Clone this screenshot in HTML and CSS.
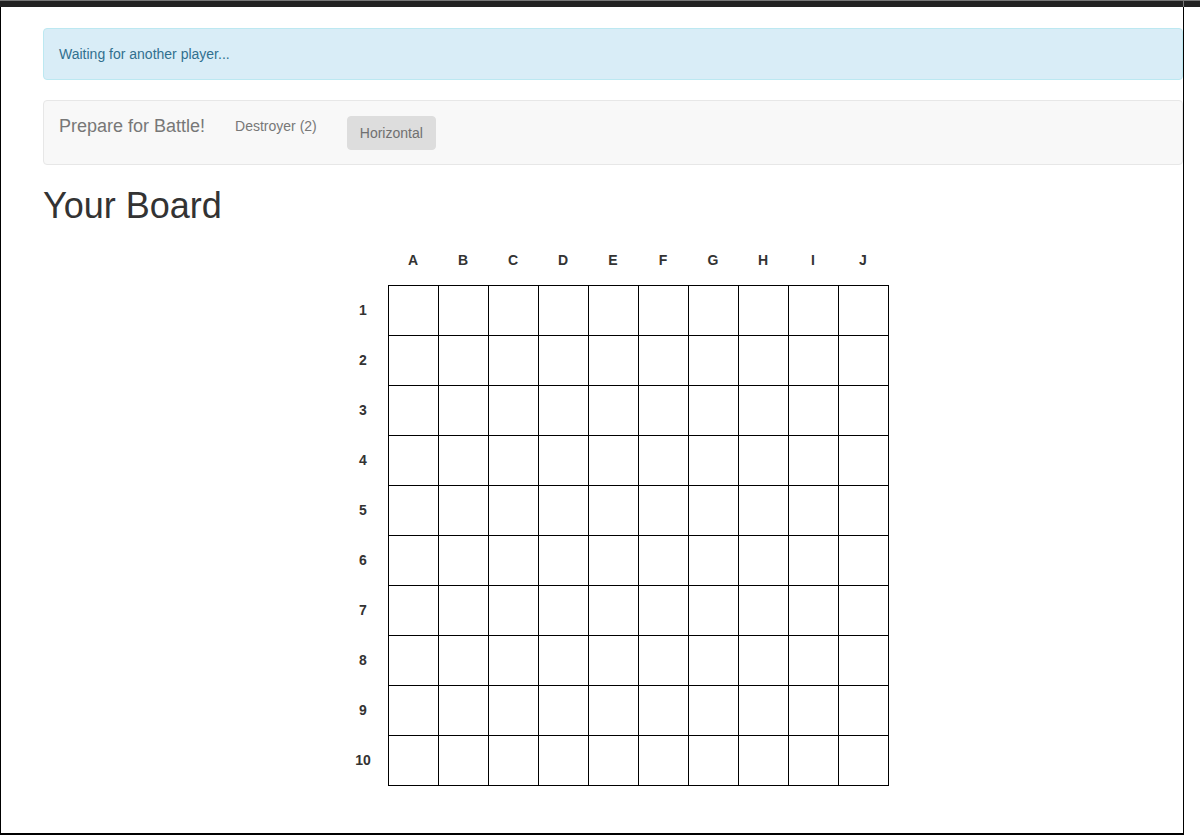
FILE: index.html
```html
<!DOCTYPE html>
<html lang="en">
<head>
<meta charset="utf-8">
<title>Battleship</title>
<link rel="stylesheet" href="styles.css">
</head>
<body>
<div class="topbar"></div>
<div class="frame">
  <div class="alert">Waiting for another player...</div>
  <div class="toolbar">
    <span class="brand">Prepare for Battle!</span>
    <span class="ship">Destroyer (2)</span>
    <button class="btn" type="button">Horizontal</button>
  </div>
  <h1 class="title">Your Board</h1>
  <div class="board-wrap">
    <div class="board">
      <div class="corner"></div>
      <div class="col-labels">
        <span>A</span><span>B</span><span>C</span><span>D</span><span>E</span>
        <span>F</span><span>G</span><span>H</span><span>I</span><span>J</span>
      </div>
      <div class="row-labels">
        <span>1</span><span>2</span><span>3</span><span>4</span><span>5</span>
        <span>6</span><span>7</span><span>8</span><span>9</span><span>10</span>
      </div>
      <div class="cells" id="cells"></div>
    </div>
  </div>
</div>
<script>
  var c = document.getElementById('cells');
  for (var i = 0; i < 100; i++) {
    var d = document.createElement('div');
    d.className = 'cell';
    c.appendChild(d);
  }
</script>
</body>
</html>
```

FILE: styles.css
```css
html, body {
  margin: 0;
  padding: 0;
  background: #fff;
}

body {
  font-family: "Liberation Sans", Arial, sans-serif;
  font-size: 14px;
  line-height: 20px;
  color: #333;
}

.topbar {
  height: 6px;
  border-top: 1px solid #777;
  background: linear-gradient(to right, #222 1183px, #777 1183px, #777 1184px, #222 1184px);
}

.frame {
  box-sizing: border-box;
  width: 1184px;
  height: 828px;
  border-left: 1px solid #000;
  border-right: 1px solid #000;
  border-bottom: 2px solid #000;
  padding: 21px 0 0 42px;
}

.alert {
  box-sizing: border-box;
  height: 52px;
  padding: 15px;
  margin-bottom: 20px;
  background: #d9edf7;
  border: 1px solid #bce8f1;
  border-radius: 4px;
  color: #31708f;
}

.toolbar {
  box-sizing: border-box;
  height: 65px;
  display: flex;
  align-items: flex-start;
  background: #f8f8f8;
  border: 1px solid #e7e7e7;
  border-radius: 4px;
  margin-bottom: 20px;
  color: #777;
}

.brand {
  padding: 15px;
  font-size: 18px;
  line-height: 20px;
}

.ship {
  margin: 15px 15px 0 15px;
  line-height: 20px;
}

.btn {
  margin: 15px 0 0 15px;
  height: 34px;
  padding: 6px 12px;
  font-family: inherit;
  font-size: 14px;
  line-height: 20px;
  color: #707070;
  background: #ddd;
  border: 1px solid #ddd;
  border-radius: 4px;
}

.title {
  margin: 0 0 10px 0;
  height: 40px;
  font-size: 36px;
  line-height: 42px;
  font-weight: 500;
  color: #333;
}

.board-wrap {
  display: flex;
  justify-content: center;
  padding-left: 1px;
}

.board {
  display: grid;
  grid-template-columns: 50px 501px;
  grid-template-rows: 50px 501px;
}

.col-labels {
  display: flex;
}

.col-labels span {
  width: 50px;
  display: flex;
  align-items: center;
  justify-content: center;
  font-weight: bold;
  color: #333;
}

.row-labels {
  display: flex;
  flex-direction: column;
}

.row-labels span {
  height: 50px;
  display: flex;
  align-items: center;
  justify-content: center;
  font-weight: bold;
  color: #333;
}

.cells {
  display: grid;
  grid-template-columns: repeat(10, 49px);
  grid-template-rows: repeat(10, 49px);
  gap: 1px;
  padding: 1px;
  background: #000;
}

.cell {
  background: #fff;
}
```
